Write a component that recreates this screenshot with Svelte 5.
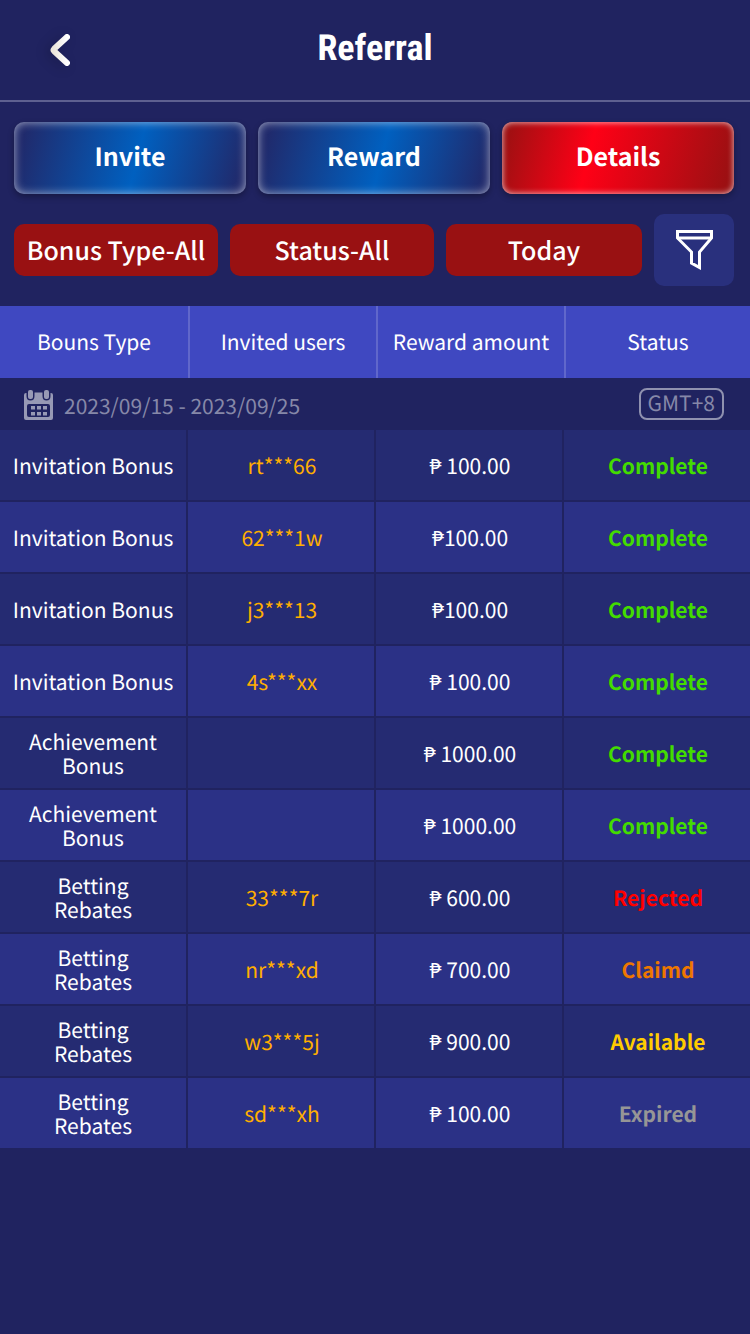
<script lang="ts">
	interface Row {
		type: string;
		user: string;
		amount: string;
		status: string;
	}

	const tabs = ["Invite", "Reward", "Details"];
	const filters = ["Bonus Type-All", "Status-All", "Today"];
	const columns = ["Bouns Type", "Invited users", "Reward amount", "Status"];

	const rows: Row[] = [
		{ type: "Invitation Bonus", user: "rt***66", amount: "₱ 100.00", status: "Complete" },
		{ type: "Invitation Bonus", user: "62***1w", amount: "₱100.00", status: "Complete" },
		{ type: "Invitation Bonus", user: "j3***13", amount: "₱100.00", status: "Complete" },
		{ type: "Invitation Bonus", user: "4s***xx", amount: "₱ 100.00", status: "Complete" },
		{ type: "Achievement\nBonus", user: "", amount: "₱ 1000.00", status: "Complete" },
		{ type: "Achievement\nBonus", user: "", amount: "₱ 1000.00", status: "Complete" },
		{ type: "Betting\nRebates", user: "33***7r", amount: "₱ 600.00", status: "Rejected" },
		{ type: "Betting\nRebates", user: "nr***xd", amount: "₱ 700.00", status: "Claimd" },
		{ type: "Betting\nRebates", user: "w3***5j", amount: "₱ 900.00", status: "Available" },
		{ type: "Betting\nRebates", user: "sd***xh", amount: "₱ 100.00", status: "Expired" }
	];

	let current = $state("Details");
</script>

<div class="page">
	<header>
		<button type="button" class="back" aria-label="Back">
			<svg width="20" height="32" viewBox="0 0 20 32">
				<defs>
					<linearGradient id="arrow" x1="0" y1="0" x2="1" y2="0">
						<stop offset="0" stop-color="#ece6dc" />
						<stop offset="1" stop-color="#ffffff" />
					</linearGradient>
				</defs>
				<path
					d="M17 3 4.200 14.800Q3 16 4.200 17.200L17 29"
					fill="none"
					stroke="url(#arrow)"
					stroke-width="6"
					stroke-linecap="round"
					stroke-linejoin="round"
				/>
			</svg>
		</button>
		<h1>Referral</h1>
	</header>

	<nav class="tabs">
		{#each tabs as tab}
			<button
				type="button"
				class:current={current === tab}
				onclick={() => (current = tab)}
			>
				{tab}
			</button>
		{/each}
	</nav>

	<div class="filters">
		{#each filters as filter}
			<button type="button" class="filter" aria-haspopup="listbox">{filter}</button>
		{/each}
		<button type="button" class="funnel" aria-label="Filter">
			<svg width="38" height="40" viewBox="-1 0 38 40" fill="none" stroke="#fff">
				<path d="M1.500 1.500H35.500V8L23.500 22V37.500L15.500 33V22L1.500 8Z" stroke-width="3" />
				<path d="M1 8H36" stroke-width="3" />
			</svg>
		</button>
	</div>

	<table>
		<thead>
			<tr>
				{#each columns as column}
					<th scope="col">{column}</th>
				{/each}
			</tr>
		</thead>
		<tbody>
			<tr class="period">
				<td colspan="4">
					<div>
						<svg width="30" height="32" viewBox="0 -2 30 32" fill="#9799b5">
							<path
								fill-rule="evenodd"
								d="M2 3H2.500V6Q2.500 10.500 6.500 10.500T10.500 6V2.500H18.500V6Q18.500 10.500 22.500 10.500T26.500 6V3H27Q29 3 29 5V28Q29 30 27 30H2Q0 30 0 28V5Q0 3 2 3ZM5 14Q3 14 3 16V25Q3 27 5 27H24Q26 27 26 25V16Q26 14 24 14Z"
							/>
							<rect x="4" y="0" width="5" height="9" rx="2" />
							<rect x="20" y="0" width="5" height="9" rx="2" />
							<path d="M7 16h4v3.500h-4zM13 16h4v3.500h-4zM19 16h4v3.500h-4zM7 22h4v3.500h-4zM13 22h4v3.500h-4zM19 22h4v3.500h-4z" />
						</svg>
						<span>2023/09/15 - 2023/09/25</span>
						<span class="zone">GMT+8</span>
					</div>
				</td>
			</tr>
			{#each rows as row}
				<tr class="row">
					<td class="type">{row.type}</td>
					<td class="user">{row.user}</td>
					<td>{row.amount}</td>
					<td class="status {row.status.toLowerCase()}">{row.status}</td>
				</tr>
			{/each}
		</tbody>
	</table>
</div>

<style>
	:global(body) {
		background-color: #202360;
	}

	.page {
		font-family: "Noto Sans CJK SC", "Noto Sans", sans-serif;
		font-size: 21px;
		text-rendering: geometricPrecision;
		color: white;
	}

	button {
		font-family: inherit;
		text-rendering: inherit;
		color: white;
		border: none;
		padding: 0;
		cursor: pointer;
	}

	header {
		display: grid;
		grid-template-columns: 80px 1fr 80px;
		align-items: center;
		height: 100px;
		border-bottom: 2px solid #5e6090;

		h1 {
			margin: 0;
			padding-bottom: 4px;
			text-align: center;
			font-family: "Roboto Condensed", Roboto, sans-serif;
			font-size: 36px;
			font-weight: bold;
			line-height: 42px;
		}
	}

	.back {
		display: flex;
		justify-content: flex-end;
		padding-right: 10px;
		background: none;

		svg {
			filter: drop-shadow(-4px 2px 6px rgba(0, 0, 0, 0.2));
		}
	}

	.tabs {
		display: flex;
		gap: 12px;
		padding: 20px 16px 20px 14px;

		button {
			flex: 1;
			height: 72px;
			padding-bottom: 4px;
			border-radius: 10px;
			font-size: 25px;
			font-weight: bold;
			background: linear-gradient(104deg, #202a6c 5%, #0060c0 53%, #202a6c 96%);
			box-shadow:
				inset 0 0 10px rgba(255, 255, 255, 0.6),
				0 3px 6px rgba(0, 0, 0, 0.3);

			&.current {
				background: linear-gradient(104deg, #9e1012 3%, #ff0016 38%, #9a1012 97%);
				box-shadow:
					inset 0 0 6px rgba(255, 255, 255, 0.8),
					0 3px 6px rgba(0, 0, 0, 0.3);
			}
		}
	}

	.filters {
		display: flex;
		align-items: center;
		gap: 12px;
		padding: 0 16px 20px 14px;
	}

	.filter {
		flex: 204;
		height: 52px;
		border-radius: 10px;
		background-color: #991112;
		font-size: 25px;
		font-weight: 500;
		white-space: nowrap;

		&:nth-child(3) {
			flex: 196;
		}
	}

	.funnel {
		display: flex;
		align-items: center;
		justify-content: center;
		width: 80px;
		height: 72px;
		border-radius: 10px;
		background-color: #29307d;
	}

	table {
		width: 100%;
		table-layout: fixed;
		border-collapse: separate;
		border-spacing: 0;
	}

	th,
	td {
		box-sizing: border-box;
		padding: 0;
		text-align: center;
		line-height: 24px;
	}

	th {
		height: 72px;
		background-color: #3f48c1;
		font-weight: normal;

		& + th {
			border-left: 2px solid #6067cb;
		}

		&:last-child {
			width: 24.8%;
		}
	}

	.period {
		color: #8688a8;

		div {
			display: flex;
			align-items: center;
			gap: 10px;
			height: 52px;
			padding: 0 26px 0 24px;
		}

		span {
			padding-top: 4px;
		}

		.zone {
			margin-left: auto;
			padding: 1px 7px 3px;
			border: 2px solid #8f91af;
			border-radius: 8px;
		}
	}

	.row {
		td {
			height: 72px;
			padding: 2px 0 0 2px;
			border-right: 2px solid #202360;
			border-bottom: 2px solid #202360;
			background-color: #252b72;

			&:last-child {
				border-right: none;
			}
		}

		&:nth-child(odd) td {
			background-color: #2b3186;
		}

		.type {
			padding-left: 0;
			white-space: pre-line;
		}

		.user {
			color: #ffae00;
		}

		.status {
			font-weight: bold;
		}

		.complete {
			color: #43dc00;
		}

		.rejected {
			color: #ff0000;
		}

		.claimd {
			color: #ee7700;
		}

		.available {
			color: #ffcc00;
		}

		.expired {
			color: #969696;
		}
	}
</style>
